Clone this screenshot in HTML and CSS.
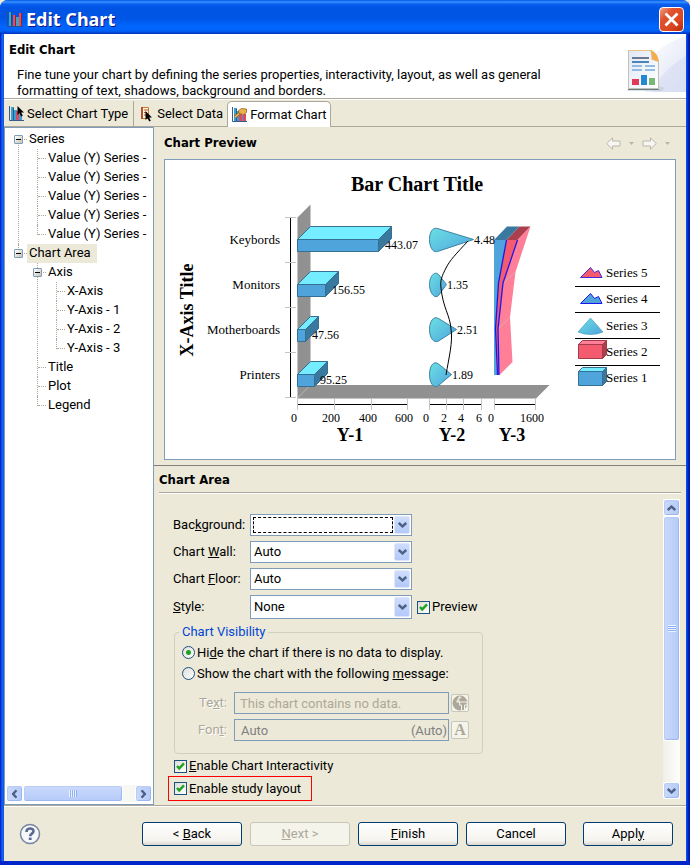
FILE: index.html
```html
<!DOCTYPE html>
<html lang="en">
<head>
<meta charset="utf-8">
<title>Edit Chart</title>
<link rel="stylesheet" href="styles.css">
</head>
<body>
<svg class="defs" width="0" height="0" aria-hidden="true">
  <defs>
    <linearGradient id="cone" x1="0" y1="0" x2="1" y2="1"><stop offset="0" stop-color="#6be0e4"/><stop offset="1" stop-color="#50a4dc"/></linearGradient>
    <linearGradient id="paper" x1="0" y1="0" x2="1" y2="1"><stop offset="0" stop-color="#dfe8f6"/><stop offset="1" stop-color="#ffffff"/></linearGradient>
    <linearGradient id="beam" x1="0" y1="0" x2="1" y2="1"><stop offset="0" stop-color="#ffffff"/><stop offset="1" stop-color="#dde3f5"/></linearGradient>
    <symbol id="down" viewBox="0 0 9 6"><path d="M.8 1 4.5 4.4 8.2 1" fill="none" stroke="#4d6185" stroke-width="2.4"/></symbol>
    <symbol id="bars" viewBox="0 0 16 16"><path d="M1.5 0v14.5H16" fill="none" stroke="#3a5a8c"/><path d="M3 1h3v13H3z" fill="#3f9ed0"/><path d="M5 2h1v12H5z" fill="#1c5f94"/><path d="M6 4h3v10H6z" fill="#3f9ed0"/><path d="M8 5h3v9H8z" fill="#e0485c"/><path d="M11 8h3v6h-3z" fill="#3f9ed0"/></symbol>
    <symbol id="check" viewBox="0 0 13 13"><path d="M3 6 5.2 8.4 10 3.4" fill="none" stroke="#21a121" stroke-width="2.4"/></symbol>
  </defs>
</svg>
<main class="window">
  <header class="titlebar">
    <svg width="16" height="16" viewBox="0 0 16 16" aria-hidden="true"><path d="M.5 0v15.5H16" fill="none" stroke="#2b4c94"/><path d="M2 1h3v14H2z" fill="#3da5c4"/><path d="M4 1h1v14H4z" fill="#154e79"/><path d="M6 4h3v11H6z" fill="#f04a50"/><path d="M8 4h1v11H8z" fill="#8f2342"/><path d="M9 6h3v9H9z" fill="#3da5c4"/><path d="M12 2h3v13h-3z" fill="#f04a50"/><path d="M14 2h1v13h-1z" fill="#8f2342"/></svg>
    <h1>Edit Chart</h1>
    <button class="close" aria-label="Close"><svg width="15" height="15" viewBox="0 0 15 15"><path d="M1.5 1.5l12 12m0-12l-12 12" stroke="#fff" stroke-width="2.8"/></svg></button>
  </header>
  <div class="client">
    <section class="banner">
      <div class="banner-text">
        <h2>Edit Chart</h2>
        <p>Fine tune your chart by defining the series properties, interactivity, layout, as well as general formatting of text, shadows, background and borders.</p>
      </div>
      <svg class="banner-art" width="75" height="64" viewBox="0 0 75 64" aria-hidden="true">
        <path d="M75 2C55 8 42 18 34 34V58H75z" fill="url(#beam)"/>
        <path d="M75 22C58 32 48 44 40 58H75z" fill="#d5dcf1" opacity=".6"/>
        <path d="M17 54l31-2 6 2-4 3H16z" fill="#bcc3ce" opacity=".5"/>
        <path d="M17.500 16.500h23l7 10v28h-30z" fill="url(#paper)" stroke="#c4c1b4"/>
        <path d="M17 55.500h31" stroke="#638184"/><path d="M17 16.500h23" stroke="#ecc283"/>
        <path d="M39 16c5 1 9 6 8.500 12l-7-2.500c0-4 0-7-1.500-9.500z" fill="#f0ae50"/>
        <path d="M21 24h17" stroke="#6e7890" stroke-width="2"/><path d="M21 28h17" stroke="#4b83b5" stroke-width="2"/>
        <path d="M21 32h10m3 0h10M21 36h10m3 0h10" stroke="#93bce0" stroke-width="2"/>
        <path d="M21 45h7v6h-7z" fill="#e13a58"/><path d="M30 41h6v10h-6z" fill="#2388cf"/><path d="M38 44h6v7h-6z" fill="#79b777"/>
      </svg>
    </section>
    <nav class="tabs" role="tablist">
      <button class="tab" role="tab" aria-selected="false"><svg width="16" height="16" viewBox="0 0 16 16"><use href="#bars"/><path d="M9.500 0v9l2-1.800 1.800 3.300 1.500-.8-1.600-3.100H16z" fill="#000"/></svg>Select Chart Type</button>
      <button class="tab" role="tab" aria-selected="false"><svg width="16" height="16" viewBox="0 0 16 16"><path d="M3.500 1.500h7v11h-7z" fill="#fff6df" stroke="#c9792d"/><path d="M3 1h2v12H3z" fill="#b5502d"/><path d="M6 4h4M6 6.500h3M6 9h2" stroke="#b5502d"/><path d="M7.500 5v9l2-1.800 1.800 3.300 1.500-.8-1.600-3.100H14z" fill="#000"/></svg>Select Data</button>
      <button class="tab selected" role="tab" aria-selected="true"><svg width="16" height="16" viewBox="0 0 16 16"><use href="#bars"/><path d="M12 7h3v7h-3z" fill="#e0485c"/><path d="M4 10l5-4" stroke="#9a6420" stroke-width="3"/><path d="M4 10l5-4" stroke="#f0c062" stroke-width="1.500"/><path d="M7.500 3.500l3-2 5 .5v3.500l-3 2-4.500-1z" fill="#eab24d" stroke="#9a6420" stroke-width=".8"/></svg>Format Chart</button>
    </nav>
    <div class="body">
      <aside class="tree-pane">
        <ul class="tree">
          <li><div class="row"><button class="toggle" aria-label="Collapse Series"></button><span class="name">Series</span></div>
            <ul>
              <li><div class="row"><span class="name">Value (Y) Series -</span></div></li>
              <li><div class="row"><span class="name">Value (Y) Series -</span></div></li>
              <li><div class="row"><span class="name">Value (Y) Series -</span></div></li>
              <li><div class="row"><span class="name">Value (Y) Series -</span></div></li>
              <li><div class="row"><span class="name">Value (Y) Series -</span></div></li>
            </ul>
          </li>
          <li><div class="row"><button class="toggle" aria-label="Collapse Chart Area"></button><span class="name current">Chart Area</span></div>
            <ul>
              <li><div class="row"><button class="toggle" aria-label="Collapse Axis"></button><span class="name">Axis</span></div>
                <ul>
                  <li><div class="row"><span class="name">X-Axis</span></div></li>
                  <li><div class="row"><span class="name">Y-Axis - 1</span></div></li>
                  <li><div class="row"><span class="name">Y-Axis - 2</span></div></li>
                  <li><div class="row"><span class="name">Y-Axis - 3</span></div></li>
                </ul>
              </li>
              <li><div class="row"><span class="name">Title</span></div></li>
              <li><div class="row"><span class="name">Plot</span></div></li>
              <li><div class="row"><span class="name">Legend</span></div></li>
            </ul>
          </li>
        </ul>
        <div class="scroll horizontal">
          <button class="arrow" aria-label="Scroll left"><svg class="left" width="9" height="6"><use href="#down"/></svg></button>
          <div class="thumb"><i></i></div>
          <div class="track"></div>
          <button class="arrow" aria-label="Scroll right"><svg class="right" width="9" height="6"><use href="#down"/></svg></button>
        </div>
      </aside>
      <div class="detail">
        <section class="preview">
          <div class="preview-head">
            <h2>Chart Preview</h2>
            <div class="history">
              <button aria-label="Back in history"><svg width="15" height="13" viewBox="0 0 15 13"><path d="M.7 6.500 6.500.8V4h7.500v5H6.500v3.200z" fill="#f7f6f2" stroke="#bab7ac"/></svg></button>
              <button aria-label="Back list"><svg width="5" height="3" viewBox="0 0 5 3"><path d="M0 0h5L2.500 3z" fill="#b9b6aa"/></svg></button>
              <button aria-label="Forward in history"><svg width="15" height="13" viewBox="0 0 15 13"><path d="M14.300 6.500 8.500.8V4H1v5h7.500v3.200z" fill="#f7f6f2" stroke="#bab7ac"/></svg></button>
              <button aria-label="Forward list"><svg width="5" height="3" viewBox="0 0 5 3"><path d="M0 0h5L2.500 3z" fill="#b9b6aa"/></svg></button>
            </div>
          </div>
          <svg class="chart" viewBox="165 160 510 299" role="img" aria-label="Bar Chart Title">
            <path d="M297.500 217.500l13-13V385l-13 13z" fill="#919191"/>
            <path d="M297.500 398l13-13h239l-13 13z" fill="#919191"/>
            <path d="M297.500 398l13-13" stroke="#b3b3b3" stroke-width=".7"/>
            <path d="M297.500 217v181.500h239" fill="none" stroke="#c4c4c4"/>
            <path d="M290.500 217v181" stroke="#000"/>
            <path d="M285 217.500h11M285 262.500h11M285 307.500h11M285 352.500h11M285 397.500h11" stroke="#c4c4c4"/>
            <path d="M297 404.500h111M429 404.500h53M494 404.500h42" stroke="#000"/>
            <path d="M297.500 399v11m37-11v11m37-11v11m36-11v11M429.500 399v11m17-11v11m17-11v11m18-11v11M494.500 399v11m41-11v11" stroke="#c4c4c4"/>
            <g stroke="#356f92">
              <g fill="#73edff"><path d="M297.500 239.500l13-13h81l-13 13z"/><path d="M297.500 284.500l13-13h28l-13 13z"/><path d="M297.500 329.500l13-13h8l-13 13z"/><path d="M297.500 374.500l13-13h17l-13 13z"/></g>
              <g fill="#39789f"><path d="M378.500 239.500l13-13v12l-13 13z"/><path d="M325.500 284.500l13-13v12l-13 13z"/><path d="M305.500 329.500l13-13v12l-13 13z"/><path d="M314.500 374.500l13-13v12l-13 13z"/></g>
              <g fill="#50a4dc"><path d="M297.500 239.500h81v12h-81z"/><path d="M297.500 284.500h28v12h-28z"/><path d="M297.500 329.500h8v12h-8z"/><path d="M297.500 374.500h17v12h-17z"/></g>
            </g>
            <g fill="url(#cone)" stroke="#3b82a3">
              <path d="M473.500 239.500l-36-11c-5-1.500-8 4-8 11s3 13.500 8 12z"/>
              <path d="M446.500 284.500l-8-10c-4-4-9 2-9 10s5 15 9 11z"/>
              <path d="M456.500 329.500l-18-11c-5-3-9 3-9 11s4 14 9 11.500z"/>
              <path d="M451.500 374.500l-13-10.500c-5-4-9 2.500-9 10.500s4 15 9 11z"/>
            </g>
            <path d="M468 241C456 254 450 260 446 268S440 280 441 288C443 308 450 315 451 329C453 342 449 357 446 375" fill="none" stroke="#000"/>
            <path d="M494 240h12.500l-8 43-3 47 1.500 45h-3z" fill="#50a4dc"/>
            <path d="M494 240l13-13.500h12.500l-13 13.500z" fill="#39789f"/>
            <path d="M506.500 240l13-13.500h11l-13 13.500z" fill="#ab3f4e"/>
            <path d="M506.500 240h11L503 283l-5 46 1.500 46H497l-1.500-46 3-46z" fill="#f45b6e"/>
            <path d="M517.500 240l13-13.500L515.500 272l-5.500 45 2.500 45-13 13-1.500-46 5-46z" fill="#ff7f98"/>
            <path d="M503 283l12.500-11M498 329l12-12" stroke="#d6aab0"/>
            <path d="M506.500 240l-8 43-3 46 2 46M517.500 240L503 283l-5 46 1 46" fill="none" stroke="#1b16ec" stroke-width="1.300"/>
            <g class="chart-num">
              <text x="385" y="249">443.07</text><text x="332" y="294">156.55</text><text x="312" y="339">47.56</text><text x="320" y="384">95.25</text>
              <text x="474" y="244">4.48</text><text x="447" y="289">1.35</text><text x="457" y="334">2.51</text><text x="452" y="379">1.89</text>
              <g text-anchor="middle"><text x="294" y="422">0</text><text x="331" y="422">200</text><text x="368" y="422">400</text><text x="404" y="422">600</text><text x="426" y="422">0</text><text x="444" y="422">2</text><text x="461" y="422">4</text><text x="479" y="422">6</text><text x="491" y="422">0</text><text x="532" y="422">1600</text></g>
            </g>
            <g class="chart-cat" text-anchor="end"><text x="280" y="244">Keybords</text><text x="280" y="289">Monitors</text><text x="280" y="334">Motherboards</text><text x="280" y="379">Printers</text></g>
            <g class="chart-axis" text-anchor="middle"><text x="350" y="441">Y-1</text><text x="452" y="441">Y-2</text><text x="512" y="441">Y-3</text><text transform="translate(193 310) rotate(-90)">X-Axis Title</text></g>
            <text class="chart-title" x="417" y="191" text-anchor="middle">Bar Chart Title</text>
            <path d="M575 286.500h85M575 312.500h85M575 338.500h85M575 365.500h85" stroke="#000"/>
            <path d="M580.500 277.500l10-10 4 5 4-2 3.500 7z" fill="#f45b6e" stroke="#4a28d8"/>
            <path d="M580.500 303.500l10-10 4 5 4-2 3.500 7z" fill="#50a4dc" stroke="#1b16ec"/>
            <path d="M590.500 318l12.500 14q-12.500 5-25 0z" fill="url(#cone)" stroke="#4a9dbb" stroke-width=".7"/>
            <g stroke="#a23c4b"><path d="M578.500 344.500l4-4h24l-4 4z" fill="#ff7f98"/><path d="M602.500 344.500l4-4v14l-4 4z" fill="#ab3f4e"/><path d="M578.500 344.500h24v14h-24z" fill="#f45b6e"/></g>
            <g stroke="#356f92"><path d="M578.500 371.500l4-4h24l-4 4z" fill="#73edff"/><path d="M602.500 371.500l4-4v14l-4 4z" fill="#39789f"/><path d="M578.500 371.500h24v14h-24z" fill="#50a4dc"/></g>
            <g class="chart-cat"><text x="606" y="277">Series 5</text><text x="606" y="303">Series 4</text><text x="606" y="330">Series 3</text><text x="606" y="356">Series 2</text><text x="606" y="382">Series 1</text></g>
          </svg>
        </section>
        <section class="settings">
          <h2>Chart Area</h2>
          <div class="settings-body">
            <form class="form">
              <div class="fields">
                <label for="bg">Bac<u>k</u>ground:</label>
                <span class="combo focus"><select id="bg"><option></option></select><span class="drop"><svg width="9" height="6"><use href="#down"/></svg></span></span>
                <label for="wall">Chart <u>W</u>all:</label>
                <span class="combo"><select id="wall"><option>Auto</option></select><span class="drop"><svg width="9" height="6"><use href="#down"/></svg></span></span>
                <label for="floor">Chart <u>F</u>loor:</label>
                <span class="combo"><select id="floor"><option>Auto</option></select><span class="drop"><svg width="9" height="6"><use href="#down"/></svg></span></span>
                <label for="style"><u>S</u>tyle:</label>
                <span class="combo tall"><select id="style"><option>None</option></select><span class="drop"><svg width="9" height="6"><use href="#down"/></svg></span></span>
                <label class="option"><span class="box"><input type="checkbox" checked><svg width="13" height="13"><use href="#check"/></svg></span>Preview</label>
              </div>
              <fieldset>
                <legend>Chart Visibility</legend>
                <label class="option"><input type="radio" name="vis" checked><span>Hi<u>d</u>e the chart if there is no data to display.</span></label>
                <label class="option"><input type="radio" name="vis"><span>Show the chart with the following <u>m</u>essage:</span></label>
                <div class="message">
                  <label for="msg">Te<u>x</u>t:</label>
                  <input id="msg" type="text" value="This chart contains no data." disabled>
                  <button type="button" class="mini" disabled aria-label="Externalize text"><svg width="16" height="16" viewBox="0 0 16 16"><circle cx="8" cy="8" r="7.500" fill="#aca899"/><path d="M7 1l3 1-3 2.500 1 2-2 1.500-2-1z" fill="#e4e2d6"/><path d="M7.500 7h7.500v3h-2.500v5.500H9.500V10h-2z" fill="#aca899" stroke="#f5f4ea"/></svg></button>
                  <span class="caption">Fon<u>t</u>:</span>
                  <div class="font-box"><span>Auto</span><span>(Auto)</span></div>
                  <button type="button" class="mini letter" disabled aria-label="Edit font">A</button>
                </div>
              </fieldset>
              <label class="option outer"><span class="box"><input type="checkbox" checked><svg width="13" height="13"><use href="#check"/></svg></span><span><u>E</u>nable Chart Interactivity</span></label>
              <label class="option outer marked"><span class="box"><input type="checkbox" checked><svg width="13" height="13"><use href="#check"/></svg></span>Enable study layout</label>
            </form>
            <div class="scroll vertical">
              <button class="arrow" aria-label="Scroll up"><svg class="up" width="9" height="6"><use href="#down"/></svg></button>
              <div class="thumb"><i></i></div>
              <div class="track"></div>
              <button class="arrow" aria-label="Scroll down"><svg width="9" height="6"><use href="#down"/></svg></button>
            </div>
          </div>
        </section>
      </div>
    </div>
    <footer class="footer">
      <button class="help" aria-label="Help"><svg width="22" height="22" viewBox="0 0 22 22"><circle cx="11" cy="11" r="9.500" fill="#f6f7f9" stroke="#7885a3" stroke-width="1.500"/><path d="M7.500 9c0-4.500 7-4.500 7-.8 0 2.500-3.300 2.300-3.300 5" fill="none" stroke="#5a6a90" stroke-width="2.600"/><path d="M9.800 14.600h2.800v2.400H9.800z" fill="#5a6a90"/></svg></button>
      <div class="wizard"><button class="push">&lt; <u>B</u>ack</button><button class="push" disabled><u>N</u>ext &gt;</button><button class="push"><u>F</u>inish</button><button class="push">Cancel</button></div>
      <button class="push apply">Appl<u>y</u></button>
    </footer>
  </div>
</main>
</body>
</html>
```
FILE: styles.css
```css
* { box-sizing: border-box; }
body, h1, h2, p, ul, fieldset { margin: 0; padding: 0; }
body { background: #ece9d8; color: #000; font: 13px/16px Roboto, sans-serif; }
button, input, select { font: inherit; color: inherit; margin: 0; padding: 0; }
h2 { font: bold 13px/16px "DejaVu Sans Condensed", "DejaVu Sans", sans-serif; }
svg { display: block; flex: none; }
.defs { position: absolute; }

.window { min-height: 100vh; display: flex; flex-direction: column; padding: 0 4px; border-bottom: 4px solid #0025c8; border-radius: 8px 8px 0 0; background: linear-gradient(90deg, #0019cf 0, #0831d9 1px, #166aee 2px, #0855dd 4px, #0855dd calc(100% - 4px), #0046f0 calc(100% - 3px), #0025c8 calc(100% - 2px), #00138c 100%); }
.titlebar { display: flex; align-items: center; gap: 3px; height: 34px; margin: 0 -4px; padding: 4px 6px 0 7px; border-radius: 8px 8px 0 0; background: linear-gradient(#0058e6 0, #3a93ff 2px, #0a5ff0 4px, #0054e3 8px, #0055e5 18px, #0066ff 27px, #0061f5 31px, #003dd0 33px, #0036b8 34px); color: #fff; }
.titlebar h1 { flex: 1; font: bold 18px/24px "Noto Sans", sans-serif; text-shadow: 1px 1px #0f1089; }
.close { width: 25px; height: 25px; display: grid; place-items: center; border: 1px solid #fff; border-radius: 4px; background: linear-gradient(135deg, #f0a08a, #e0532f 30%, #d9451f 70%, #b42a0c); }
.client { flex: 1; display: flex; flex-direction: column; background: #ece9d8; }

.banner { display: flex; justify-content: space-between; height: 65px; background: #fff; border-bottom: 1px solid #aca899; }
.banner-text { padding: 8px 0 0 5px; }
.banner p { max-width: 560px; padding: 9px 0 0 8px; }

.tabs { display: flex; height: 28px; padding-top: 1px; border-top: 1px solid #fff; border-bottom: 1px solid #aca899; }
.tab { display: flex; align-items: center; gap: 3px; padding: 0 5px 0 4px; border: 0; border-right: 1px solid #aca899; background: none; }
.tab:nth-child(2) { border-right: 0; padding-right: 4px; }
.tab.selected { padding: 0 3px; margin-bottom: -1px; border: 1px solid #aca899; border-bottom: 0; border-radius: 5px 5px 0 0; background: #fff; }

.body { flex: 1; display: flex; }
.tree-pane { flex: none; width: 150px; display: flex; flex-direction: column; justify-content: space-between; border: 1px solid #7f9db9; background: #fff; overflow: hidden; }
.tree { padding: 2px 0 0 4px; }
.tree, .tree ul { list-style: none; }
.tree ul { margin-left: 19px; }
.tree li { position: relative; white-space: nowrap; }
.tree li::before { content: ""; position: absolute; left: 9px; top: 0; bottom: 0; border-left: 1px dotted #aca899; }
.tree li:last-child::before { bottom: auto; height: 10px; }
.tree > li:first-child::before { top: 9px; }
.row { position: relative; display: flex; align-items: center; height: 19px; padding-left: 18px; }
.row::before { content: ""; position: absolute; left: 10px; top: 9px; width: 8px; border-top: 1px dotted #aca899; }
.name { padding: 1px 6px 2px 2px; }
.name.current { background: #ece9d8; }
.toggle { position: absolute; left: 5px; top: 5px; width: 9px; height: 9px; border: 1px solid #7b9ebd; border-radius: 1px; background: linear-gradient(#000, #000) center / 5px 1px no-repeat, linear-gradient(135deg, #fff, #c9c2b4); }

.scroll { display: flex; flex: none; background: #f7f7f3; }
.arrow, .thumb { display: grid; place-items: center; flex: none; border: 1px solid #fff; border-radius: 3px; background: linear-gradient(90deg, #cbd9fc, #b5cbf8); box-shadow: inset -1px -1px #9db8ee, inset 1px 1px #b9ccf5; }
.arrow { width: 17px; height: 17px; }
.horizontal { height: 17px; margin: 0 1px 2px; }
.horizontal .thumb { flex: 98 1 0; background: linear-gradient(#cbd9fc, #b5cbf8); }
.horizontal .track { flex: 12 1 0; }
.vertical { flex-direction: column; width: 17px; margin-bottom: 2px; }
.vertical .thumb { flex: 225 1 0; }
.vertical .track { flex: 41 1 0; background: linear-gradient(90deg, #f0efe9, #fefefb); }
.thumb i { width: 8px; height: 7px; background: repeating-linear-gradient(#eef4fe 0 1px, #8cb0f8 1px 2px); }
.horizontal .thumb i { background: repeating-linear-gradient(90deg, #eef4fe 0 1px, #8cb0f8 1px 2px); }
.left { transform: rotate(90deg); }
.right { transform: rotate(-90deg); }
.up { transform: rotate(180deg); }

.detail { flex: 1; min-width: 0; display: flex; flex-direction: column; }
.preview { padding: 8px 10px 5px; border-bottom: 1px solid #808080; }
.preview-head { display: flex; justify-content: space-between; align-items: center; height: 16px; margin-bottom: 8px; }
.history { display: flex; align-items: center; gap: 8px; padding-right: 6px; }
.history button { border: 0; background: none; }
.chart { width: 100%; height: auto; border: 1px solid #7f9db9; background: #fff; }
.chart text { fill: #000; font-family: "Liberation Serif", serif; }
.chart .chart-num text { font-size: 12px; }
.chart .chart-cat text { font-size: 13px; }
.chart .chart-axis text { font-size: 18px; font-weight: bold; }
.chart .chart-title { font-size: 20px; font-weight: bold; }

.settings { flex: 1; display: flex; flex-direction: column; padding: 6px 5px 4px; }
.settings h2 { padding-bottom: 4px; border-bottom: 1px solid #aca899; box-shadow: 0 1px #fff; }
.settings-body { flex: 1; display: flex; justify-content: space-between; padding: 6px 1px 0 0; }
.form { padding: 15px 0 0 9px; }
.fields { display: grid; grid-template-columns: 77px 162px auto; row-gap: 5px; align-items: center; justify-content: start; padding-left: 5px; }
.fields > label { grid-column: 1; }
.fields > .combo { grid-column: 2; }
.fields > .option { grid-column: 3; padding-left: 5px; }
.combo { position: relative; display: flex; height: 22px; border: 1px solid #7f9db9; background: #fff; }
.combo.tall { height: 24px; }
.combo select { flex: 1; appearance: none; border: 0; padding-left: 3px; background: none; outline: 0; }
.combo.focus select { margin: 2px 18px 2px 2px; border: 1px dashed #000; }
.drop { position: absolute; right: 1px; top: 1px; bottom: 1px; width: 16px; display: grid; place-items: center; border: 1px solid #dfe8fb; border-radius: 2px; background: linear-gradient(#cfdcfc, #b3c9f8); pointer-events: none; }
fieldset { width: 309px; min-width: 0; margin: 5px 0 2px 6px; padding: 2px 0 12px 8px; border: 1px solid #d0d0bf; border-radius: 4px; }
legend { margin-left: -4px; padding: 0 3px; color: #0046d5; }
.option { display: flex; align-items: center; gap: 2px; white-space: nowrap; }
fieldset .option { height: 21px; }
.box { position: relative; width: 13px; height: 13px; }
.box input { display: block; appearance: none; width: 13px; height: 13px; border: 1px solid #1c5180; background: linear-gradient(135deg, #dcdcd7, #fff); }
.box svg { position: absolute; left: 0; top: 0; pointer-events: none; }
input[type="radio"] { appearance: none; width: 13px; height: 13px; margin-left: -1px; border: 1px solid #1c5180; border-radius: 50%; background: linear-gradient(135deg, #dcdcd7, #fff); }
input[type="radio"]:checked { background: radial-gradient(circle, #21a121 0 2px, transparent 3px), linear-gradient(135deg, #dcdcd7, #fff); }
.message { display: grid; grid-template-columns: 49px 215px 18px; column-gap: 2px; row-gap: 5px; align-items: center; padding-top: 8px; color: #aca899; }
.message label, .caption { padding-right: 5px; text-align: right; text-shadow: 1px 1px #fff; }
.message input, .font-box { height: 22px; border: 1px solid #7f9db9; background: #ece9d8; color: #aca899; }
.message input { padding-left: 5px; min-width: 0; }
.font-box { display: flex; justify-content: space-between; align-items: center; padding: 2px 1px 0 6px; color: #808080; }
.mini { display: grid; place-items: center; width: 18px; height: 18px; overflow: hidden; border: 1px solid #c9c7ba; border-radius: 2px; background: #f5f4ea; color: #aca899; }
.letter { font: bold 16px/16px "Liberation Serif", serif; }
.outer { width: 144px; height: 20px; padding-left: 5px; border: 1px solid transparent; }
.marked { height: 25px; border-color: #f00; }

.footer { display: flex; align-items: center; height: 56px; padding: 0 13px 0 15px; border-top: 1px solid #aca899; box-shadow: inset 0 1px #fff; }
.help { border: 0; background: none; }
.wizard { flex: 1; display: flex; justify-content: flex-end; gap: 8px; padding-right: 17px; }
.push { width: 100px; height: 24px; border: 1px solid #003c74; border-radius: 3px; background: linear-gradient(#fff, #f4f3ee 80%, #dcd8cc); }
.apply { width: 90px; }
.push:disabled { border-color: #c9c7ba; background: #f5f4ea; color: #aca899; }
```
